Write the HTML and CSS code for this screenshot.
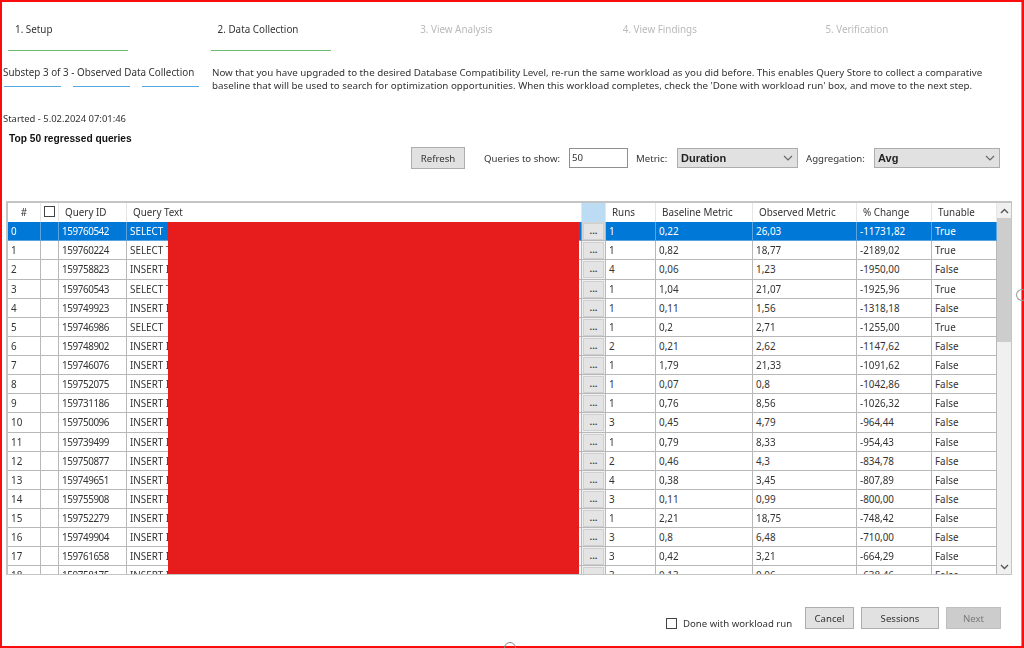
FILE: index.html
```html
<!DOCTYPE html>
<html lang="en">
<head>
    <meta charset="UTF-8">
    <meta name="viewport" content="width=device-width, initial-scale=1.0">
    <title>Data Collection</title>
    <link rel="stylesheet" href="styles.css">
</head>
<body>
    <div class="wizard">
        <div class="steps">
            <div class="step done"><span class="step-name">1. Setup</span></div>
            <div class="step done"><span class="step-name">2. Data Collection</span></div>
            <div class="step"><span class="step-name">3. View Analysis</span></div>
            <div class="step"><span class="step-name">4. View Findings</span></div>
            <div class="step"><span class="step-name">5. Verification</span></div>
        </div>

        <div class="substep-row">
            <div class="substep">
                <div class="substep-name">Substep 3 of 3 - Observed Data Collection</div>
                <div class="substep-lines"><i></i><i></i><i></i></div>
            </div>
            <p class="description">Now that you have upgraded to the desired Database Compatibility Level, re-run the same workload as you did before. This enables Query Store to collect a comparative baseline that will be used to search for optimization opportunities. When this workload completes, check the 'Done with workload run' box, and move to the next step.</p>
        </div>

        <div class="started">Started - 5.02.2024 07:01:46</div>
        <div class="grid-title">Top 50 regressed queries</div>

        <div class="controls">
            <button class="btn btn-refresh">Refresh</button>
            <label class="ctl-label label-queries">Queries to show:</label>
            <input class="queries-input" type="text" value="50">
            <label class="ctl-label label-metric">Metric:</label>
            <div class="dropdown dropdown-metric">Duration
                <svg width="10" height="6" viewBox="0 0 10 6"><path d="M1 1l4 4 4-4" fill="none" stroke="#666" stroke-width="1.1"/></svg>
            </div>
            <label class="ctl-label label-agg">Aggregation:</label>
            <div class="dropdown dropdown-agg">Avg
                <svg width="10" height="6" viewBox="0 0 10 6"><path d="M1 1l4 4 4-4" fill="none" stroke="#666" stroke-width="1.1"/></svg>
            </div>
        </div>

        <div class="grid">
            <div class="grid-body">
                <div class="row head">
                    <div class="cell center">#</div>
                    <div class="cell center"><span class="check"></span></div>
                    <div class="cell pad">Query ID</div>
                    <div class="cell pad">Query Text</div>
                    <div class="cell head-current"></div>
                    <div class="cell pad">Runs</div>
                    <div class="cell pad">Baseline Metric</div>
                    <div class="cell pad">Observed Metric</div>
                    <div class="cell pad">% Change</div>
                    <div class="cell pad">Tunable</div>
                </div>
                <div class="row selected"><div class="cell">0</div><div class="cell"></div><div class="cell id">159760542</div><div class="cell">SELECT</div><div class="cell btn-cell"><button class="more">...</button></div><div class="cell">1</div><div class="cell">0,22</div><div class="cell">26,03</div><div class="cell">-11731,82</div><div class="cell">True</div></div>
                <div class="row"><div class="cell">1</div><div class="cell"></div><div class="cell id">159760224</div><div class="cell">SELECT TOP</div><div class="cell btn-cell"><button class="more">...</button></div><div class="cell">1</div><div class="cell">0,82</div><div class="cell">18,77</div><div class="cell">-2189,02</div><div class="cell">True</div></div>
                <div class="row"><div class="cell">2</div><div class="cell"></div><div class="cell id">159758823</div><div class="cell">INSERT INTO</div><div class="cell btn-cell"><button class="more">...</button></div><div class="cell">4</div><div class="cell">0,06</div><div class="cell">1,23</div><div class="cell">-1950,00</div><div class="cell">False</div></div>
                <div class="row"><div class="cell">3</div><div class="cell"></div><div class="cell id">159760543</div><div class="cell">SELECT TOP</div><div class="cell btn-cell"><button class="more">...</button></div><div class="cell">1</div><div class="cell">1,04</div><div class="cell">21,07</div><div class="cell">-1925,96</div><div class="cell">True</div></div>
                <div class="row"><div class="cell">4</div><div class="cell"></div><div class="cell id">159749923</div><div class="cell">INSERT INTO</div><div class="cell btn-cell"><button class="more">...</button></div><div class="cell">1</div><div class="cell">0,11</div><div class="cell">1,56</div><div class="cell">-1318,18</div><div class="cell">False</div></div>
                <div class="row"><div class="cell">5</div><div class="cell"></div><div class="cell id">159746986</div><div class="cell">SELECT</div><div class="cell btn-cell"><button class="more">...</button></div><div class="cell">1</div><div class="cell">0,2</div><div class="cell">2,71</div><div class="cell">-1255,00</div><div class="cell">True</div></div>
                <div class="row"><div class="cell">6</div><div class="cell"></div><div class="cell id">159748902</div><div class="cell">INSERT INTO</div><div class="cell btn-cell"><button class="more">...</button></div><div class="cell">2</div><div class="cell">0,21</div><div class="cell">2,62</div><div class="cell">-1147,62</div><div class="cell">False</div></div>
                <div class="row"><div class="cell">7</div><div class="cell"></div><div class="cell id">159746076</div><div class="cell">INSERT INTO</div><div class="cell btn-cell"><button class="more">...</button></div><div class="cell">1</div><div class="cell">1,79</div><div class="cell">21,33</div><div class="cell">-1091,62</div><div class="cell">False</div></div>
                <div class="row"><div class="cell">8</div><div class="cell"></div><div class="cell id">159752075</div><div class="cell">INSERT INTO</div><div class="cell btn-cell"><button class="more">...</button></div><div class="cell">1</div><div class="cell">0,07</div><div class="cell">0,8</div><div class="cell">-1042,86</div><div class="cell">False</div></div>
                <div class="row"><div class="cell">9</div><div class="cell"></div><div class="cell id">159731186</div><div class="cell">INSERT INTO</div><div class="cell btn-cell"><button class="more">...</button></div><div class="cell">1</div><div class="cell">0,76</div><div class="cell">8,56</div><div class="cell">-1026,32</div><div class="cell">False</div></div>
                <div class="row"><div class="cell">10</div><div class="cell"></div><div class="cell id">159750096</div><div class="cell">INSERT INTO</div><div class="cell btn-cell"><button class="more">...</button></div><div class="cell">3</div><div class="cell">0,45</div><div class="cell">4,79</div><div class="cell">-964,44</div><div class="cell">False</div></div>
                <div class="row"><div class="cell">11</div><div class="cell"></div><div class="cell id">159739499</div><div class="cell">INSERT INTO</div><div class="cell btn-cell"><button class="more">...</button></div><div class="cell">1</div><div class="cell">0,79</div><div class="cell">8,33</div><div class="cell">-954,43</div><div class="cell">False</div></div>
                <div class="row"><div class="cell">12</div><div class="cell"></div><div class="cell id">159750877</div><div class="cell">INSERT INTO</div><div class="cell btn-cell"><button class="more">...</button></div><div class="cell">2</div><div class="cell">0,46</div><div class="cell">4,3</div><div class="cell">-834,78</div><div class="cell">False</div></div>
                <div class="row"><div class="cell">13</div><div class="cell"></div><div class="cell id">159749651</div><div class="cell">INSERT INTO</div><div class="cell btn-cell"><button class="more">...</button></div><div class="cell">4</div><div class="cell">0,38</div><div class="cell">3,45</div><div class="cell">-807,89</div><div class="cell">False</div></div>
                <div class="row"><div class="cell">14</div><div class="cell"></div><div class="cell id">159755908</div><div class="cell">INSERT INTO</div><div class="cell btn-cell"><button class="more">...</button></div><div class="cell">3</div><div class="cell">0,11</div><div class="cell">0,99</div><div class="cell">-800,00</div><div class="cell">False</div></div>
                <div class="row"><div class="cell">15</div><div class="cell"></div><div class="cell id">159752279</div><div class="cell">INSERT INTO</div><div class="cell btn-cell"><button class="more">...</button></div><div class="cell">1</div><div class="cell">2,21</div><div class="cell">18,75</div><div class="cell">-748,42</div><div class="cell">False</div></div>
                <div class="row"><div class="cell">16</div><div class="cell"></div><div class="cell id">159749904</div><div class="cell">INSERT INTO</div><div class="cell btn-cell"><button class="more">...</button></div><div class="cell">3</div><div class="cell">0,8</div><div class="cell">6,48</div><div class="cell">-710,00</div><div class="cell">False</div></div>
                <div class="row"><div class="cell">17</div><div class="cell"></div><div class="cell id">159761658</div><div class="cell">INSERT INTO</div><div class="cell btn-cell"><button class="more">...</button></div><div class="cell">3</div><div class="cell">0,42</div><div class="cell">3,21</div><div class="cell">-664,29</div><div class="cell">False</div></div>
                <div class="row"><div class="cell">18</div><div class="cell"></div><div class="cell id">159758175</div><div class="cell">INSERT INTO</div><div class="cell btn-cell"><button class="more">...</button></div><div class="cell">3</div><div class="cell">0,13</div><div class="cell">0,96</div><div class="cell">-638,46</div><div class="cell">False</div></div>
            </div>
            <div class="scrollbar">
                <div class="scroll-arrow"><svg width="9" height="6" viewBox="0 0 9 6"><path d="M1 5l3.5-3.5L8 5" fill="none" stroke="#555" stroke-width="1.4"/></svg></div>
                <div class="scroll-track"><div class="scroll-thumb"></div></div>
                <div class="scroll-arrow"><svg width="9" height="6" viewBox="0 0 9 6"><path d="M1 1l3.5 3.5L8 1" fill="none" stroke="#555" stroke-width="1.4"/></svg></div>
            </div>
            <!-- redacted query text -->
            <div class="redacted"></div>
        </div>

        <div class="footer">
            <div class="done-check"><span class="check"></span>Done with workload run</div>
            <button class="btn btn-cancel">Cancel</button>
            <button class="btn btn-sessions">Sessions</button>
            <button class="btn btn-next" disabled>Next</button>
        </div>
    </div>

    <div class="edge-mark edge-bottom"></div>
    <div class="edge-mark edge-right"></div>
</body>
</html>
```

FILE: styles.css
```css
* {
    box-sizing: border-box;
}

body {
    margin: 0;
    width: 1024px;
    height: 648px;
    overflow: hidden;
    background-color: #fff;
    font-family: "Noto Sans", sans-serif;
    font-size: 9.85px;
    color: #333;
    position: relative;
}

.wizard {
    height: 648px;
    border: 2px solid #fb0d0d;
    box-shadow: inset -1px 0 0 #9a9db5;
    display: flex;
    flex-direction: column;
    filter: blur(0.35px);
}

/* top steps */
.steps {
    display: flex;
    padding: 20px 0 0 6px;
}

.step {
    width: 202.6px;
    height: 29px;
    color: #b9b9b9;
}

.step-name {
    display: block;
    padding-left: 7px;
    line-height: 14px;
}

.step.done {
    color: #333;
}

.step.done::after {
    content: "";
    display: block;
    width: 120px;
    height: 1px;
    margin-top: 14px;
    background-color: #6dbb72;
}

/* substep */
.substep-row {
    display: flex;
    margin-top: 15px;
    padding-left: 1px;
}

.substep {
    width: 209px;
    flex: none;
}

.substep-name {
    line-height: 13px;
    white-space: nowrap;
}

.substep-lines {
    display: flex;
    gap: 12px;
    margin-top: 7px;
    padding-left: 1px;
}

.substep-lines i {
    display: block;
    width: 57px;
    height: 1px;
    background-color: #55a8e0;
}

.description {
    margin: 0;
    width: 800px;
    font-size: 9.76px;
    line-height: 13px;
}

.started {
    margin-top: 20px;
    padding-left: 1px;
    font-size: 9.45px;
    line-height: 13px;
}

.grid-title {
    margin-top: 7px;
    padding-left: 7px;
    font-family: "Liberation Sans", sans-serif;
    font-weight: bold;
    font-size: 10.2px;
    line-height: 13px;
    color: #111;
}

/* toolbar */
.controls {
    display: flex;
    align-items: center;
    height: 22px;
    margin-top: 2px;
    padding-left: 409px;
    font-size: 9.65px;
}

.btn {
    font-family: inherit;
    font-size: inherit;
    color: #333;
    background-color: #e1e1e1;
    border: 1px solid #adadad;
    padding: 0;
    height: 22px;
}

.btn-refresh {
    width: 54px;
}

.ctl-label {
    white-space: nowrap;
}

.label-queries {
    margin-left: 19px;
    width: 85px;
}

.queries-input {
    width: 59px;
    height: 20px;
    border: 1px solid #8f8f8f;
    padding: 0 2px 2px;
    font-family: inherit;
    font-size: inherit;
    color: #333;
    outline: none;
}

.label-metric {
    margin-left: 8px;
    width: 41px;
}

.dropdown {
    height: 20px;
    display: flex;
    align-items: center;
    justify-content: space-between;
    padding: 0 4px 0 3px;
    background-color: #e1e1e1;
    border: 1px solid #adadad;
    font-family: "Liberation Sans", sans-serif;
    font-weight: bold;
    font-size: 11px;
    color: #222;
}

.dropdown-metric {
    width: 121px;
}

.label-agg {
    margin-left: 8px;
    width: 68px;
}

.dropdown-agg {
    width: 126px;
}

/* data grid */
.grid {
    position: relative;
    display: flex;
    width: 1006px;
    height: 374px;
    margin: 32px 0 0 4px;
    border: 2px solid #c4c4c4;
    border-right-width: 1px;
    border-bottom-width: 1px;
    overflow: hidden;
}

.grid-body {
    width: 989px;
    flex: none;
    overflow: hidden;
}

.row {
    display: grid;
    grid-template-columns: 33px 18px 68px 455px 24px 50px 97px 104px 75px 65px;
    height: 19.13px;
}

.cell {
    display: flex;
    align-items: center;
    padding-left: 3px;
    border-right: 1px solid #b8b8b8;
    border-bottom: 1px solid #b8b8b8;
    white-space: nowrap;
    overflow: hidden;
    background-color: #fff;
}

.cell.id {
    letter-spacing: -0.4px;
}

.row.head .cell {
    border-color: #e6e6e6;
    border-bottom: none;
    padding-bottom: 2px;
}

.row.head .center {
    justify-content: center;
    padding-left: 0;
}

.row.head .pad {
    padding-left: 6px;
}

.row.head .head-current {
    background-color: #bcdcf4;
}

.row.selected .cell {
    background-color: #0078d7;
    color: #fff;
    border-color: #5aa5e0;
}

.row.selected .btn-cell {
    background-color: #d4d4d4;
    border-color: #b8b8b8;
}

.btn-cell {
    padding: 1px 1px 0 1px;
    background-color: #f0f0f0;
}

.more {
    width: 100%;
    height: 17px;
    padding: 0 0 3px;
    background-color: #e4e4e4;
    border: 1px solid #cfcfcf;
    font-family: inherit;
    font-size: 9.6px;
    font-weight: bold;
    color: #444;
}

.check {
    display: inline-block;
    width: 11px;
    height: 11px;
    border: 1px solid #444;
    background-color: #fff;
}

.scrollbar {
    flex: none;
    width: 14px;
    display: flex;
    flex-direction: column;
    background-color: #f0f0f0;
}

.scroll-arrow {
    height: 15px;
    flex: none;
    display: flex;
    align-items: center;
    justify-content: center;
}

.scroll-track {
    flex: 1;
}

.scroll-thumb {
    height: 124px;
    background-color: #cdcdcd;
}

.redacted {
    position: absolute;
    left: 160px;
    top: 19px;
    width: 411px;
    height: 353px;
    background-color: #e71d1d;
}

/* bottom bar */
.footer {
    display: flex;
    align-items: flex-start;
    margin-top: 32px;
    padding-left: 664px;
    font-size: 9.65px;
}

.done-check {
    display: flex;
    align-items: center;
    gap: 6px;
    width: 139px;
    margin-top: 9px;
    height: 14px;
    white-space: nowrap;
}

.btn-cancel {
    width: 49px;
}

.btn-sessions {
    width: 78px;
    margin-left: 7px;
}

.btn-next {
    width: 55px;
    margin-left: 7px;
    background-color: #cccccc;
    border-color: #bfbfbf;
    color: #7a7a7a;
}

/* window edge artefacts */
.edge-mark {
    position: absolute;
    border: 1px solid #8a8a8a;
    border-radius: 50%;
    width: 12px;
    height: 12px;
}

.edge-bottom {
    left: 504px;
    top: 642px;
}

.edge-right {
    left: 1016px;
    top: 289px;
    border-color: #9a9a9a;
    border-right-color: transparent;
}
```
